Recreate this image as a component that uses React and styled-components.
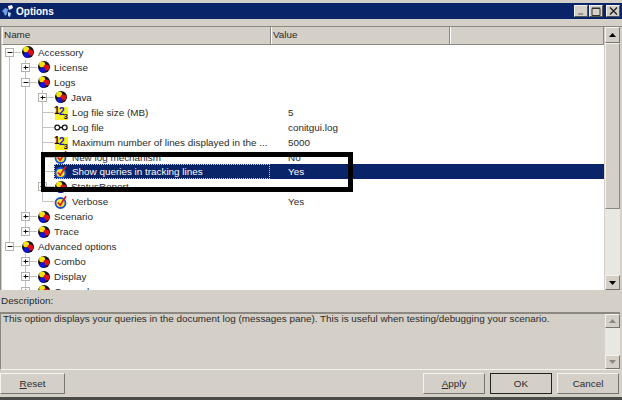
import React from "react";
import styled, { createGlobalStyle } from "styled-components";

const GlobalStyle = createGlobalStyle`
  html, body {
    margin: 0;
    padding: 0;
    background: #d4d0c8;
  }
  body {
    font-family: "Liberation Sans", Arial, sans-serif;
    font-size: 9.9px;
    color: #2a2a2a;
  }
`;

const treeRows = [
  { name: "Accessory", level: 0, kind: "ball", open: true },
  { name: "License", level: 1, kind: "ball", closed: true },
  { name: "Logs", level: 1, kind: "ball", open: true },
  { name: "Java", level: 2, kind: "ball", closed: true },
  { name: "Log file size (MB)", level: 2, kind: "num", value: "5" },
  { name: "Log file", level: 2, kind: "glasses", value: "conitgui.log" },
  { name: "Maximum number of lines displayed in the ...", level: 2, kind: "num", value: "5000" },
  { name: "New log mechanism", level: 2, kind: "check", value: "No" },
  { name: "Show queries in tracking lines", level: 2, kind: "check", value: "Yes", selected: true },
  { name: "StatusReport", level: 2, kind: "ball", closed: true },
  { name: "Verbose", level: 2, kind: "check", value: "Yes" },
  { name: "Scenario", level: 1, kind: "ball", closed: true },
  { name: "Trace", level: 1, kind: "ball", closed: true },
  { name: "Advanced options", level: 0, kind: "ball", open: true },
  { name: "Combo", level: 1, kind: "ball", closed: true },
  { name: "Display", level: 1, kind: "ball", closed: true },
  { name: "General", level: 1, kind: "ball", closed: true },
  { name: "Language", level: 1, kind: "ball", closed: true },
];

const levelX = [7, 23, 40];

// true when another row of this level still follows under the same parent
function hasNext(index, level) {
  for (let i = index + 1; i < treeRows.length; i++) {
    if (treeRows[i].level < level) return false;
    if (treeRows[i].level === level) return true;
  }
  return false;
}

const Window = styled.div`
  width: 622px;
  height: 400px;
  box-sizing: border-box;
  display: flex;
  flex-direction: column;
  padding-top: 3px;
  border-bottom: 3px solid #4a4a48;
  overflow: hidden;
`;

const TitleBar = styled.div`
  height: 16px;
  flex: none;
  display: flex;
  align-items: center;
  background: #0a246a;
  padding: 0 2px 0 1px;
`;

const TitleText = styled.span`
  color: #fff;
  font-weight: 700;
  font-size: 10px;
  margin-left: 1px;
  flex: 1;
`;

const CaptionButtons = styled.div`
  display: flex;
  gap: 1px;
`;

const CaptionButton = styled.div`
  width: 14px;
  height: 12px;
  margin-left: ${(p) => (p.$gap ? "2px" : "0")};
  background: #d4d0c8;
  border: 1px solid;
  border-color: #f4f2ec #555 #555 #f4f2ec;
  box-sizing: border-box;
  display: flex;
  align-items: center;
  justify-content: center;
`;

const ListPanel = styled.div`
  margin-top: 7px;
  height: 263px;
  flex: none;
  display: flex;
  border-top: 1px solid #8a8880;
  border-left: 1px solid #8a8880;
  padding-left: 1px;
  padding-right: 2px;
`;

const ListMain = styled.div`
  flex: 1;
  min-width: 0;
  display: flex;
  flex-direction: column;
`;

const HeaderRow = styled.div`
  height: 17px;
  flex: none;
  display: flex;
  border-bottom: 1px solid #8a8880;
`;

const HeaderCell = styled.div`
  width: ${(p) => p.$width}px;
  flex: ${(p) => (p.$fill ? 1 : "none")};
  box-sizing: border-box;
  padding-left: 1px;
  padding-top: 2px;
  border-left: 1px solid #fff;
  border-right: 1px solid #8a8880;
`;

const TreeBody = styled.div`
  flex: 1;
  min-height: 0;
  overflow: hidden;
  background: #fff;
`;

const Row = styled.div`
  height: 14.95px;
  display: flex;
  align-items: center;
`;

const NameCell = styled.div`
  width: 268px;
  height: 15px;
  flex: none;
  display: flex;
  align-items: center;
`;

const Label = styled.span`
  margin-left: ${(p) => (p.$ball ? 3 : 4)}px;
  white-space: nowrap;
  height: 15px;
  line-height: 15px;
  color: ${(p) => (p.$selected ? "#fff" : "inherit")};
`;

const SelectedName = styled.div`
  flex: 1;
  height: 15px;
  display: flex;
  align-items: center;
  background: #0a246a;
  box-sizing: border-box;
  outline: 1px dotted #c8cfe0;
  outline-offset: -1px;
`;

const ValueCell = styled.div`
  flex: 1;
  height: 15px;
  line-height: 15px;
  padding-left: 18px;
  color: ${(p) => (p.$selected ? "#fff" : "inherit")};
  background: ${(p) => (p.$selected ? "#0a246a" : "transparent")};
`;

const Scrollbar = styled.div`
  width: 15px;
  flex: none;
  display: flex;
  flex-direction: column;
  margin-left: 1px;
`;

const ScrollButton = styled.div`
  height: ${(p) => p.$h || 15}px;
  flex: none;
  box-sizing: border-box;
  background: #d4d0c8;
  border: 1px solid;
  border-color: #f4f2ec #77756f #77756f #f4f2ec;
  display: flex;
  align-items: center;
  justify-content: center;
`;

const Thumb = styled.div`
  height: ${(p) => p.$h}px;
  flex: none;
  box-sizing: border-box;
  background: #d4d0c8;
  border: 1px solid;
  border-color: #f4f2ec #8a8880 #8a8880 #f4f2ec;
`;

const Track = styled.div`
  flex: 1;
  min-height: 0;
  background: #e9e7e2;
`;

const DescriptionLabel = styled.div`
  height: 22px;
  flex: none;
  display: flex;
  align-items: center;
  padding: 0 0 2px 1px;
  box-sizing: border-box;
`;

const DescriptionBox = styled.div`
  height: 58px;
  flex: none;
  display: flex;
  box-sizing: border-box;
  border-top: 2px solid #8a8880;
  border-left: 1px solid #8a8880;
  border-bottom: 1px solid #f4f2ec;
  margin-right: 2px;
`;

const DescriptionText = styled.div`
  flex: 1;
  padding-left: 2px;
  line-height: 10px;
  white-space: nowrap;
`;

const ButtonBar = styled.div`
  margin-top: 3px;
  display: flex;
  padding-right: 3px;
`;

const Spacer = styled.div`
  flex: 1;
`;

const Button = styled.div`
  width: ${(p) => p.$w || 62}px;
  height: 21px;
  margin-left: ${(p) => p.$ml || 0}px;
  box-sizing: border-box;
  background: #d4d0c8;
  display: flex;
  align-items: center;
  justify-content: center;
  border: 1px solid;
  border-color: ${(p) => (p.$default ? "#222" : "#f4f2ec #77756f #77756f #f4f2ec")};
`;

const Underline = styled.span`
  text-decoration: underline;
`;

const Annotation = styled.div`
  position: absolute;
  left: 41px;
  top: 152px;
  width: 312px;
  height: 40px;
  box-sizing: border-box;
  border: solid #000;
  border-width: 5px 5px 5px 4px;
  pointer-events: none;
`;

function Arrow({ up, color = "#000" }) {
  return (
    <svg width="7" height="4" viewBox="0 0 7 4">
      <path d={up ? "M3.5 0L7 4H0z" : "M0 0h7L3.5 4z"} fill={color} />
    </svg>
  );
}

function AppIcon() {
  return (
    <svg width="14" height="14" viewBox="0 0 14 14">
      <path d="M1 7l3-3 3 1-1 5-2 2-1-3z" fill="#6f9fe8" />
      <path d="M7 2l4-1 1 3-4 2z" fill="#fff" />
      <path d="M7 8l3 1-1 4-2-1z" fill="#bcd4f4" />
    </svg>
  );
}

function BallIcon() {
  return (
    <svg width="14" height="14" viewBox="0 0 14 14" style={{ flex: "none" }}>
      <circle cx="7" cy="7" r="6" fill="#111" />
      <circle cx="5.2" cy="4.4" r="3" fill="#f5e311" />
      <circle cx="9.3" cy="7.4" r="3" fill="#e01010" />
      <circle cx="5.6" cy="10" r="2.7" fill="#1414d8" />
    </svg>
  );
}

function NumIcon() {
  return (
    <svg width="14" height="15" viewBox="0 0 14 15" style={{ flex: "none" }}>
      <rect x="1" y="2" width="13" height="13" fill="#f8f020" />
      <text x="0" y="9" fontFamily="Liberation Sans" fontSize="10" fontWeight="700" fill="#111">1</text>
      <text x="5" y="10" fontFamily="Liberation Sans" fontSize="10" fontWeight="700" fill="#1818c8">2</text>
      <text x="9.5" y="14" fontFamily="Liberation Sans" fontSize="8" fontWeight="700" fill="#111">3</text>
    </svg>
  );
}

function GlassesIcon() {
  return (
    <svg width="14" height="14" viewBox="0 0 14 14" style={{ flex: "none" }}>
      <circle cx="3.3" cy="7.5" r="2.4" fill="none" stroke="#111" strokeWidth="1.3" />
      <circle cx="10.7" cy="7.5" r="2.4" fill="none" stroke="#111" strokeWidth="1.3" />
      <path d="M5.7 7.5h2.6" stroke="#111" strokeWidth="1.3" />
    </svg>
  );
}

function CheckIcon() {
  return (
    <svg width="14" height="14" viewBox="0 0 14 14" style={{ flex: "none" }}>
      <circle cx="6.5" cy="8" r="5" fill="#f8e820" stroke="#1a50d8" strokeWidth="1.8" />
      <path d="M3.8 7.5l2.4 2.6L12 1.2" fill="none" stroke="#e01818" strokeWidth="1.7" />
    </svg>
  );
}

const icons = {
  ball: BallIcon,
  num: NumIcon,
  glasses: GlassesIcon,
  check: CheckIcon,
};

function Connector({ row, index }) {
  const x = levelX[row.level];
  const width = x + 12;
  const lines = [];
  for (let l = 0; l < row.level; l++) {
    if (hasNext(index, l)) {
      lines.push(<path key={l} d={`M${levelX[l] + 0.5} 0V15`} stroke="#c4c2bc" />);
    }
  }
  const next = hasNext(index, row.level);
  return (
    <svg width={width} height="15" viewBox={`0 0 ${width} 15`} style={{ flex: "none" }}>
      {lines}
      <path d={`M${x + 0.5} ${index === 0 ? 7 : 0}V${next ? 15 : 7.5}`} stroke="#c4c2bc" />
      <path d={`M${x + 0.5} 7.5H${width}`} stroke="#c4c2bc" />
      {(row.open || row.closed) && (
        <g>
          <rect x={x - 3.5} y="3.5" width="8" height="8" fill="#fff" stroke="#b5b3ac" />
          <path d={`M${x - 1.5} 7.5h5`} stroke="#111" />
          {row.closed && <path d={`M${x + 0.5} 5.5v4`} stroke="#111" />}
        </g>
      )}
    </svg>
  );
}

function TreeRow({ row, index }) {
  const Icon = icons[row.kind];
  const isBall = row.kind === "ball";
  return (
    <Row>
      <NameCell>
        <Connector row={row} index={index} />
        {row.selected ? (
          <SelectedName>
            <Icon />
            <Label $selected>{row.name}</Label>
          </SelectedName>
        ) : (
          <>
            <Icon />
            <Label $ball={isBall}>{row.name}</Label>
          </>
        )}
      </NameCell>
      <ValueCell $selected={row.selected}>{row.value}</ValueCell>
    </Row>
  );
}

export default function App() {
  return (
    <>
      <GlobalStyle />
      <Window>
        <TitleBar>
          <AppIcon />
          <TitleText>Options</TitleText>
          <CaptionButtons>
            <CaptionButton>
              <svg width="8" height="8" viewBox="0 0 8 8">
                <path d="M1 7h5" stroke="#888" strokeWidth="1.6" />
              </svg>
            </CaptionButton>
            <CaptionButton>
              <svg width="10" height="9" viewBox="0 0 10 9">
                <path d="M1 1.5h8v7H1z" fill="none" stroke="#333" />
                <path d="M1 1.2h8" stroke="#333" strokeWidth="1.4" />
              </svg>
            </CaptionButton>
            <CaptionButton $gap>
              <svg width="9" height="8" viewBox="0 0 9 8">
                <path d="M1 0.5l7 7M8 0.5l-7 7" stroke="#222" strokeWidth="1.4" />
              </svg>
            </CaptionButton>
          </CaptionButtons>
        </TitleBar>

        <ListPanel>
          <ListMain>
            <HeaderRow>
              <HeaderCell $width={269}>Name</HeaderCell>
              <HeaderCell $width={179}>Value</HeaderCell>
              <HeaderCell $fill />
            </HeaderRow>
            <TreeBody>
              {treeRows.map((row, i) => (
                <TreeRow key={row.name} row={row} index={i} />
              ))}
            </TreeBody>
          </ListMain>
          <Scrollbar>
            <ScrollButton $h={16}>
              <Arrow up />
            </ScrollButton>
            <Thumb $h={166} />
            <Track />
            <ScrollButton>
              <Arrow />
            </ScrollButton>
          </Scrollbar>
        </ListPanel>

        <DescriptionLabel>Description:</DescriptionLabel>
        <DescriptionBox>
          <DescriptionText>
            This option displays your queries in the document log (messages pane). This is useful when testing/debugging your scenario.
          </DescriptionText>
          <Scrollbar>
            <ScrollButton $h={14}>
              <Arrow up color="#8a8880" />
            </ScrollButton>
            <Track />
            <ScrollButton $h={14}>
              <Arrow color="#8a8880" />
            </ScrollButton>
          </Scrollbar>
        </DescriptionBox>

        <ButtonBar>
          <Button $w={65}>
            <span>
              <Underline>R</Underline>eset
            </span>
          </Button>
          <Spacer />
          <Button>
            <span>
              <Underline>A</Underline>pply
            </span>
          </Button>
          <Button $default $ml={5}>OK</Button>
          <Button $ml={5}>Cancel</Button>
        </ButtonBar>

        <Annotation />
      </Window>
    </>
  );
}
